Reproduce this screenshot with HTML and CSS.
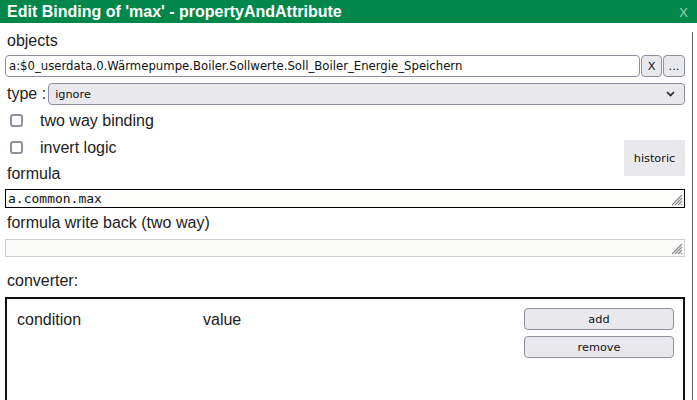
FILE: index.html
```html
<!DOCTYPE html>
<html>
<head>
<meta charset="utf-8">
<link rel="stylesheet" href="styles.css">
</head>
<body>
<div class="dialog">
  <div class="titlebar">
    <span class="title">Edit Binding of 'max' - propertyAndAttribute</span>
    <span class="close">X</span>
  </div>
  <div class="content">
    <div class="label lbl-objects">objects</div>
    <div class="obj-row">
      <input class="field obj-input" type="text" value="a:$0_userdata.0.Wärmepumpe.Boiler.Sollwerte.Soll_Boiler_Energie_Speichern">
      <button class="btn btn-x">X</button>
      <button class="btn btn-dots">...</button>
    </div>
    <div class="type-row">
      <span class="label">type :</span>
      <div class="select-wrap">
        <select class="select"><option>ignore</option></select>
        <svg class="chev" width="9" height="6" viewBox="0 0 9 6"><path d="M1 1 L4.5 4.5 L8 1" fill="none" stroke="#222" stroke-width="1.6"/></svg>
      </div>
    </div>
    <div class="opts">
      <label class="check-row row1"><input type="checkbox" class="check"><span>two way binding</span></label>
      <label class="check-row row2"><input type="checkbox" class="check"><span>invert logic</span></label>
      <button class="btn-historic">historic</button>
      <div class="label lbl-formula">formula</div>
    </div>
    <div class="ta-wrap ta-wrap-main">
      <textarea class="ta ta-main">a.common.max</textarea>
      <svg class="grip" width="12" height="12" viewBox="0 0 12 12"><path d="M1 11 L11 1 M4 11 L11 4 M7 11 L11 7 M10 11 L11 10" stroke="#888" stroke-width="1.1"/></svg>
    </div>
    <div class="label lbl-wb">formula write back (two way)</div>
    <div class="ta-wrap ta-wrap-wb">
      <textarea class="ta ta-wb"></textarea>
      <svg class="grip" width="12" height="12" viewBox="0 0 12 12"><path d="M1 11 L11 1 M4 11 L11 4 M7 11 L11 7 M10 11 L11 10" stroke="#888" stroke-width="1.1"/></svg>
    </div>
    <div class="label lbl-conv">converter:</div>
    <div class="conv">
      <div class="conv-head">
        <span class="col-cond">condition</span>
        <span class="col-val">value</span>
      </div>
      <div class="conv-btns">
        <button class="btn btn-wide">add</button>
        <button class="btn btn-wide">remove</button>
      </div>
    </div>
  </div>
</div>
</body>
</html>
```
FILE: styles.css
```css
body {
  margin: 0;
  background: #fff;
  font-family: "Liberation Sans", Arial, sans-serif;
}
.dialog {
  width: 697px;
  height: 400px;
  overflow: hidden;
}
.titlebar {
  height: 23px;
  box-sizing: border-box;
  background: #02874a;
  display: flex;
  justify-content: space-between;
  padding: 3px 9px 0 7px;
}
.title {
  font-weight: bold;
  font-size: 16px;
  line-height: 18px;
  color: #fff;
}
.close {
  font-size: 13px;
  line-height: 15px;
  margin-top: 2px;
  color: rgba(255, 255, 255, 0.62);
}
.content {
  width: 693px;
  height: 377px;
  box-sizing: border-box;
  border-right: 1px solid #5a5a5a;
  padding: 0 7px 0 5px;
}
.label {
  font-size: 16px;
  line-height: 18px;
  color: #222;
  padding-left: 2px;
}
.lbl-objects {
  margin-top: 9px;
}
.obj-row {
  display: flex;
  gap: 1px;
  margin-top: 5px;
  height: 22px;
}
.field,
.btn,
.select,
.btn-historic {
  font-family: "DejaVu Sans", Verdana, sans-serif;
  font-size: 11.3px;
  color: #111;
}
.obj-input {
  flex: 1;
  min-width: 0;
  height: 22px;
  box-sizing: border-box;
  border: 1px solid #8f8f9d;
  border-radius: 4px;
  padding: 1px 3px;
  margin: 0;
  background: #fff;
  font-size: 11.7px;
}
.btn {
  height: 22px;
  box-sizing: border-box;
  border: 1px solid #8f8f9d;
  border-radius: 4px;
  background: #e9e9ed;
  padding: 0;
  margin: 0;
}
.btn-x {
  width: 21px;
}
.btn-dots {
  width: 22px;
}
.type-row {
  display: flex;
  align-items: center;
  margin-top: 6px;
  height: 22px;
}
.select-wrap {
  flex: 1;
  position: relative;
  margin-left: 2px;
  height: 22px;
}
.select {
  appearance: none;
  -webkit-appearance: none;
  width: 100%;
  height: 22px;
  box-sizing: border-box;
  border: 1px solid #8f8f9d;
  border-radius: 4px;
  background: #e9e9ed;
  padding: 0 0 0 6px;
  margin: 0;
}
.chev {
  position: absolute;
  right: 10px;
  top: 8px;
  pointer-events: none;
}
.opts {
  display: grid;
  grid-template-columns: 1fr 61px;
  grid-template-rows: 27px 27px auto;
  margin-top: 2px;
}
.check-row {
  display: flex;
  align-items: center;
  font-size: 16px;
  line-height: 18px;
  color: #222;
  grid-column: 1;
}
.row1 {
  grid-row: 1;
}
.row2 {
  grid-row: 2;
}
.check {
  appearance: none;
  -webkit-appearance: none;
  width: 13px;
  height: 13px;
  box-sizing: border-box;
  border: 2px solid #8f8f9d;
  border-radius: 3px;
  background: #fff;
  margin: 0 17px 0 5px;
}
.btn-historic {
  grid-column: 2;
  grid-row: 2 / 4;
  align-self: start;
  margin-top: 6px;
  height: 36px;
  width: 61px;
  border: none;
  background: #e9e9ed;
  padding: 0;
}
.lbl-formula {
  grid-column: 1;
  grid-row: 3;
  margin-top: 4px;
}
.ta-wrap {
  position: relative;
}
.ta-wrap-main {
  margin-top: 6px;
}
.ta {
  display: block;
  width: 100%;
  box-sizing: border-box;
  margin: 0;
  resize: none;
  overflow: hidden;
  font-family: "DejaVu Sans Mono", monospace;
  font-size: 13px;
  line-height: 15px;
  color: #111;
  padding: 1px 2px;
}
.ta-main {
  height: 19px;
  border: 1px solid #000;
  background: #fdfdfb;
}
.ta-wb {
  height: 18px;
  border: 1px solid #cfcfcf;
  background: #fbfbf9;
}
.grip {
  position: absolute;
  right: 2px;
  bottom: 2px;
}
.lbl-wb {
  margin-top: 6px;
}
.ta-wrap-wb {
  margin-top: 7px;
}
.lbl-conv {
  margin-top: 15px;
}
.conv {
  margin-top: 7px;
  height: 120px;
  border: 2px solid #111;
  display: flex;
  padding: 9px 9px 0 10px;
}
.conv-head {
  flex: 1;
  display: flex;
  margin-top: 3px;
  font-size: 16px;
  line-height: 18px;
  color: #222;
}
.col-cond {
  width: 186px;
}
.conv-btns {
  display: flex;
  flex-direction: column;
  gap: 6px;
}
.btn-wide {
  width: 150px;
}
```
